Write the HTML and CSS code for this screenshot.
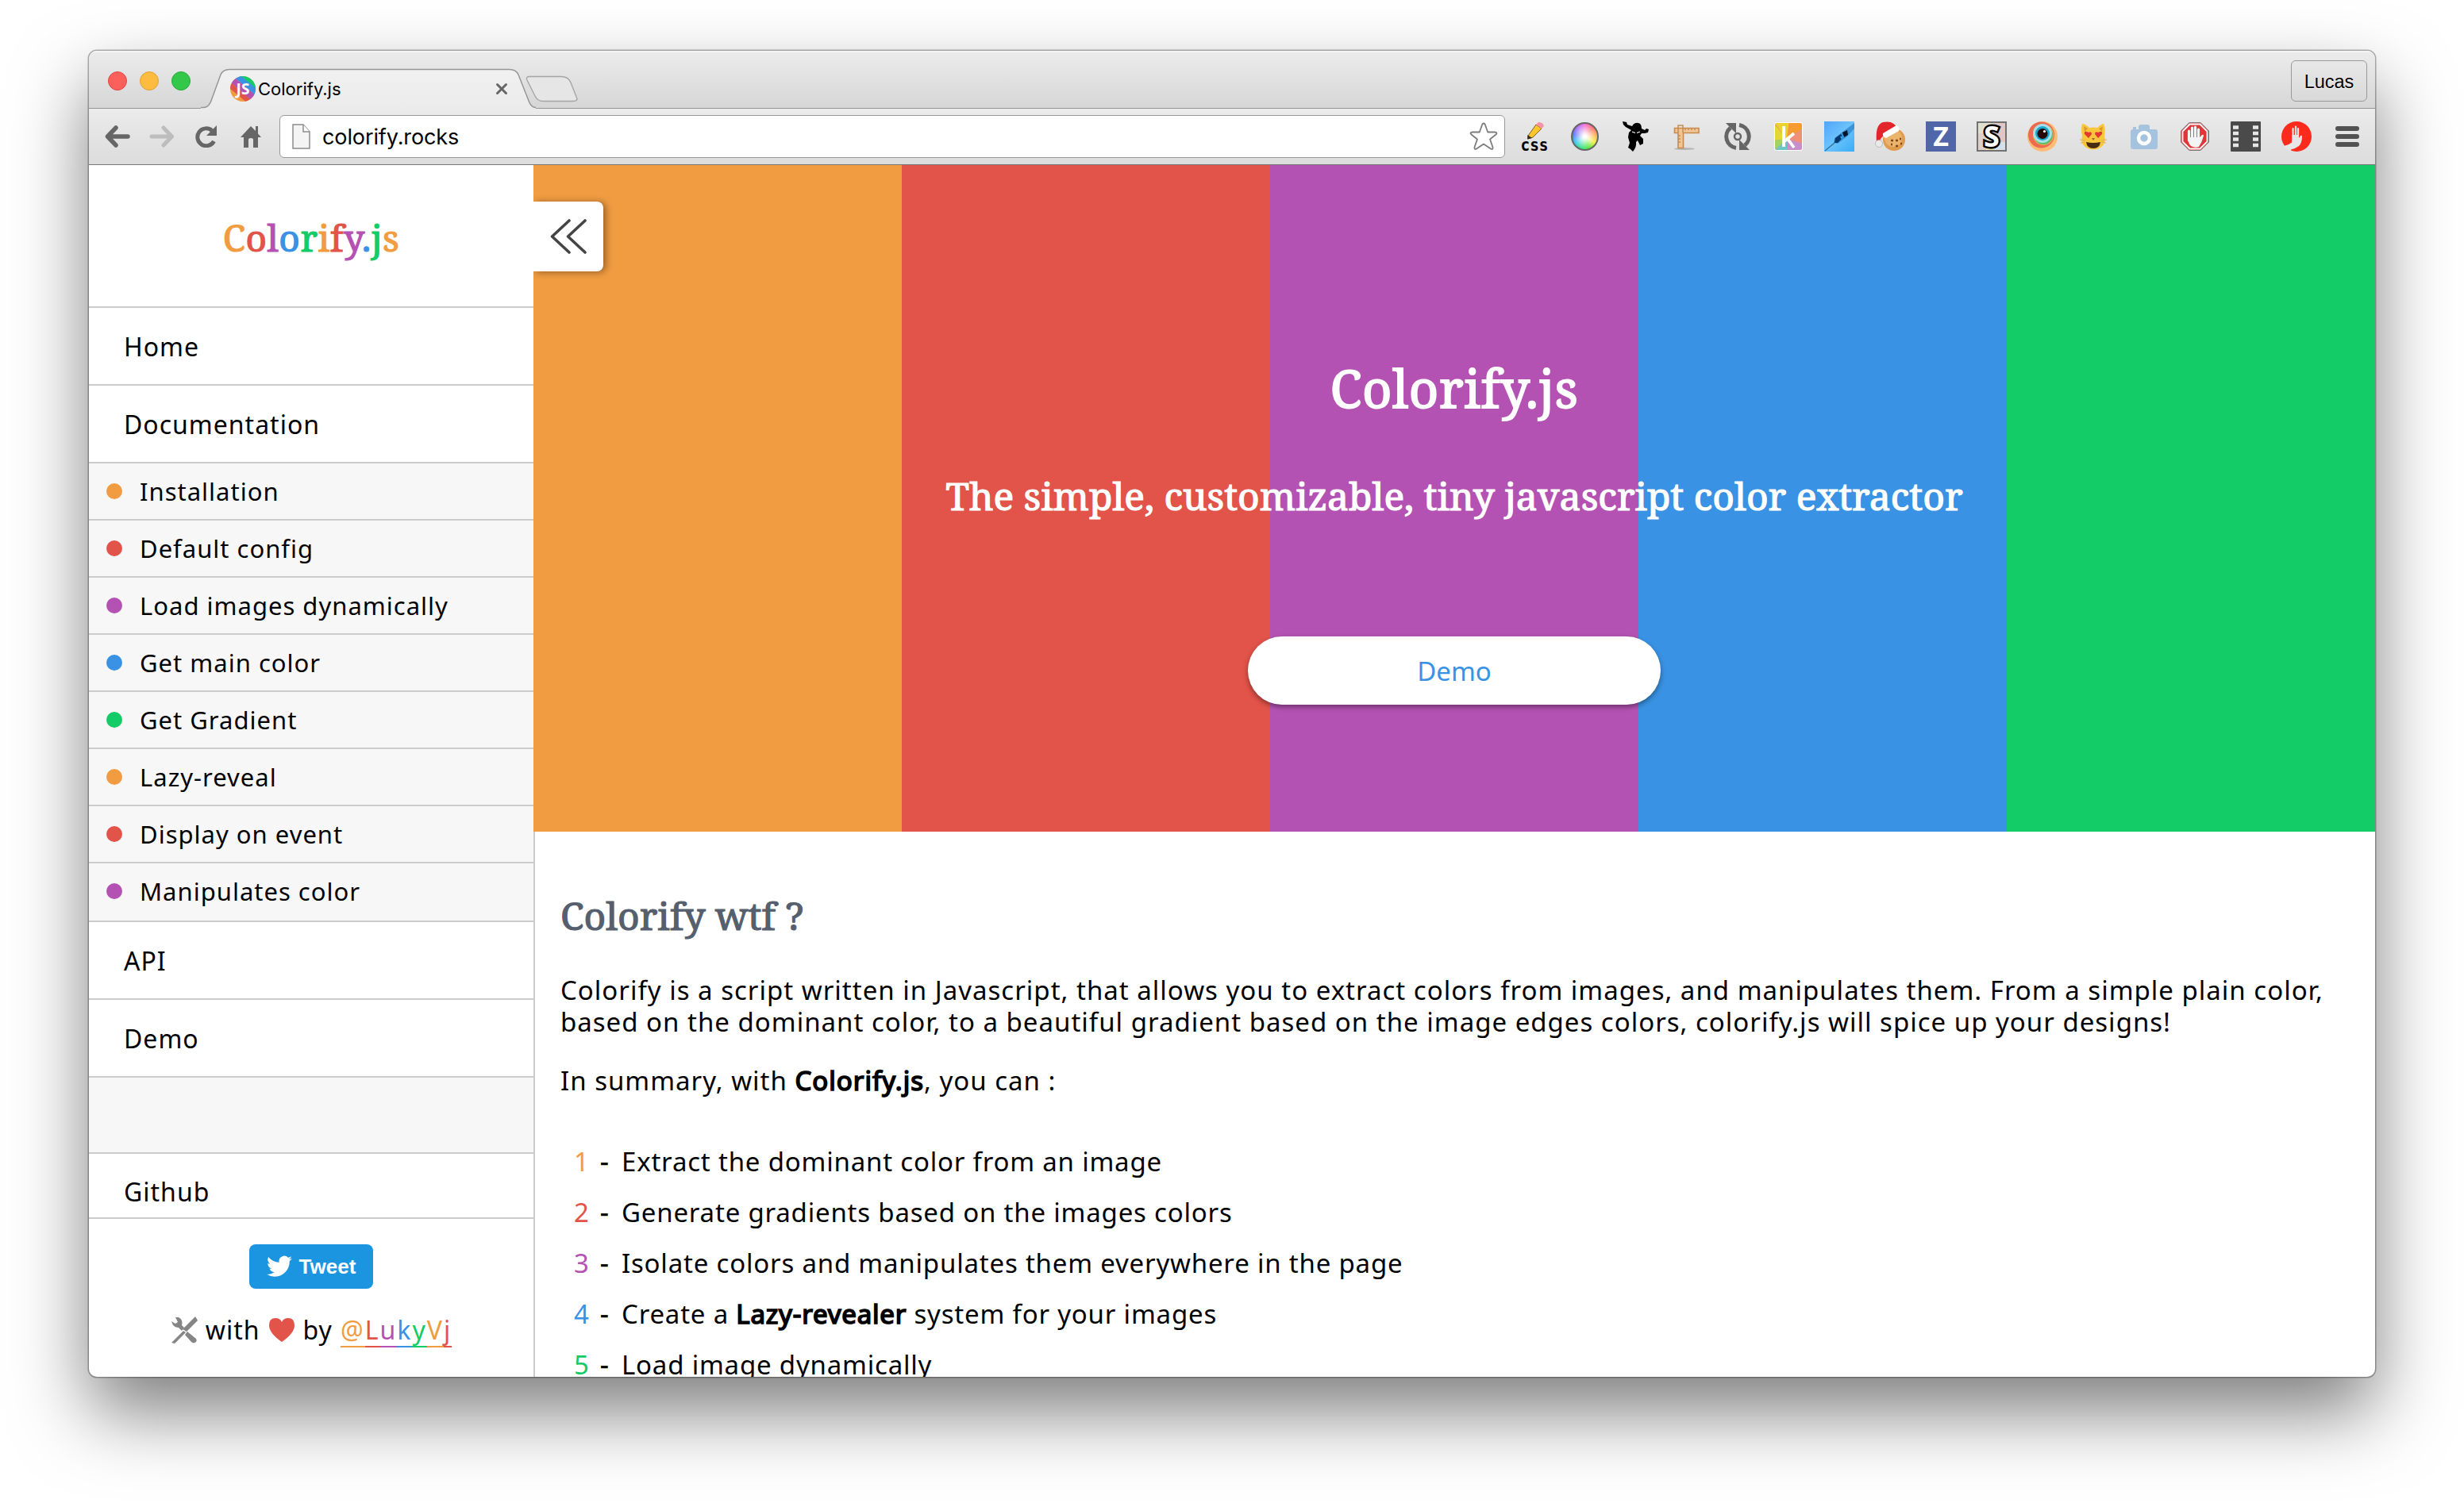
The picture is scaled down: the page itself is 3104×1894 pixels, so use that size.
FILE: index.html
```
<!DOCTYPE html>
<html lang="en">
<head>
    <meta charset="UTF-8">
    <title>Colorify.js</title>
    <link rel="stylesheet" href="styles.css">
</head>
<body>
    <div class="window">
        <div class="tabbar">
            <div class="lights">
                <span class="light close"></span>
                <span class="light minimize"></span>
                <span class="light expand"></span>
            </div>
            <div class="tab">
                <svg class="tab-shape" width="480" height="52" viewBox="0 0 480 52">
                    <defs>
                        <linearGradient id="tabFill" x1="0" y1="0" x2="0" y2="1">
                            <stop offset="0" stop-color="#f1f1f1"/>
                            <stop offset="1" stop-color="#ebebeb"/>
                        </linearGradient>
                    </defs>
                    <path d="M0 52V50.5H3Q10 50.5 13 42L25 9Q28 2.500 36 2.500H389Q397 2.500 400 9L413 42Q416 50.500 422 50.500V52Z" fill="url(#tabFill)"/>
                    <path d="M0 50.500H3Q10 50.500 13 42L25 9Q28 2.500 36 2.500H389Q397 2.500 400 9L413 42Q416 50.500 422 50.500" fill="none" stroke="#969696" stroke-width="1.500"/>
                    <path d="M414 11.500H454Q463 11.500 466 19L473 37Q476 42.500 469 42.500H431Q424 42.500 421 36L411 16Q409 11.500 414 11.500Z" fill="#e6e6e6" stroke="#a5a5a5" stroke-width="1.400"/>
                </svg>
                <div class="tab-content">
                    <svg width="32" height="32" viewBox="0 0 32 32">
                        <clipPath id="fav"><circle cx="16" cy="16" r="16"/></clipPath>
                        <g clip-path="url(#fav)">
                            <rect width="32" height="32" fill="#f19c41"/>
                            <g transform="rotate(40 16 16)">
                                <rect x="-8" y="-8" width="48" height="15" fill="#13cb67"/>
                                <rect x="-8" y="5" width="48" height="7" fill="#3992e3"/>
                                <rect x="-8" y="12" width="48" height="8" fill="#b452b3"/>
                                <rect x="-8" y="20" width="48" height="6" fill="#e25349"/>
                            </g>
                        </g>
                        <text x="16" y="23" text-anchor="middle" class="fav-text">JS</text>
                    </svg>
                    <span class="tab-title">Colorify.js</span>
                    <svg width="16" height="16" viewBox="0 0 16 16" stroke="#666" stroke-width="3" stroke-linecap="round">
                        <path d="M2.500 2.500l11 11M13.500 2.500l-11 11"/>
                    </svg>
                </div>
            </div>
            <div class="user">Lucas</div>
        </div>

        <div class="toolbar">
            <div class="nav">
                <svg width="32" height="28" viewBox="0 0 32 28" fill="none" stroke="#666" stroke-width="5.500" stroke-linecap="round" stroke-linejoin="round">
                    <path d="M14 3L3.500 14L14 25M5 14H29"/>
                </svg>
                <svg width="32" height="28" viewBox="0 0 32 28" fill="none" stroke="#bdbdbd" stroke-width="5" stroke-linecap="round" stroke-linejoin="round">
                    <path d="M18 3L28.500 14L18 25M27 14H3"/>
                </svg>
                <svg width="28" height="28" viewBox="0 0 28 28">
                    <path d="M21 6.500A11 11 0 1 0 23.500 20" fill="none" stroke="#666" stroke-width="5"/>
                    <path d="M27 0V13H14Z" fill="#666"/>
                </svg>
                <svg width="26" height="28" viewBox="0 0 26 28" fill="#666">
                    <path d="M13 1L0 15H4V28H10V18Q10 16 13 16T16 18V28H22V15H26L22 10.500V1H19V7Z"/>
                </svg>
            </div>
            <div class="omnibox">
                <svg width="24" height="32" viewBox="0 0 24 32">
                    <path d="M1 1H14L22 10V31H1Z" fill="#f4f4f4" stroke="#8c8c8c" stroke-width="1.500"/>
                    <path d="M14 1V10H22" fill="#fff" stroke="#8c8c8c" stroke-width="1.500"/>
                </svg>
                <span class="url">colorify.rocks</span>
                <svg width="36" height="36" viewBox="0 0 36 36" fill="#fff" stroke="#7c7c7c" stroke-width="1.800" stroke-linejoin="round">
                    <path d="M18 1.500Q19.500 1.500 20.200 4L23.200 12.500H32Q36 13 33.500 15.500L26 21.500L29.500 31.500Q30 35 27 33.500L18 27.500L9 33.500Q6 35 6.500 31.500L10 21.500L2.500 15.500Q0 13 4 12.500H12.800L15.800 4Q16.500 1.500 18 1.500Z"/>
                </svg>
            </div>
            <div class="extensions">
                <!-- css pencil -->
                <svg viewBox="0 0 38 38">
                    <path d="M11 18L21 4L28 9L17 20L11 22Z" fill="#fbc52b" stroke="#7a6320" stroke-width="1"/>
                    <path d="M21 4L24 1Q30 1 31 6L28 9Z" fill="#f492a6"/>
                    <path d="M10.500 17L16 21L10 22.500Z" fill="#332b18"/>
                    <text x="19" y="37" text-anchor="middle" textLength="35" lengthAdjust="spacingAndGlyphs" class="ext-css">css</text>
                </svg>
                <!-- color wheel -->
                <span class="wheel"></span>
                <!-- ninja -->
                <svg viewBox="0 0 38 38" fill="#000">
                    <path d="M2 0L7 1L8 4L14 6Q17 1 22 2Q26 3 26 9L30 11L32 9L35 10L34 14L30 15L26 15L24 18L28 22L28 28L24 30L21 24L19 26Q20 32 15 38L12 35L9 33L11 27L9 20L10 14L13 11L6 7L3 4Z"/>
                    <path d="M14 13L18 14.500M20 14.500L24 13" stroke="#fff" stroke-width="1.300"/>
                </svg>
                <!-- ruler -->
                <svg viewBox="0 0 38 38">
                    <ellipse cx="16" cy="34.500" rx="13" ry="1.500" fill="#b5b5b5"/>
                    <path d="M3.500 8.500H34V14.500H14.500V33.500H8V14.500H3.500Z" fill="#efc595" stroke="#c98a4e" stroke-width="1.600"/>
                    <path d="M8 14V5H14V14M17 8V11M21 8V11M25 8V11M29 8V11M8 18H11M8 22H11M8 26H11" fill="none" stroke="#c98a4e" stroke-width="1.500"/>
                </svg>
                <!-- refresh -->
                <svg viewBox="0 0 38 38" fill="none" stroke="#656565">
                    <path d="M17 33.500A14.500 14.500 0 0 1 10 8M21 4.500A14.500 14.500 0 0 1 28 30" stroke-width="5"/>
                    <path d="M4 2H17V15ZM34 36H21V23Z" fill="#656565" stroke="none"/>
                    <circle cx="19" cy="19" r="4" stroke-width="2.500"/>
                </svg>
                <!-- k -->
                <svg viewBox="0 0 38 38">
                    <clipPath id="kBox"><rect x="2" y="2" width="34" height="34" rx="3"/></clipPath>
                    <rect x="1" y="1" width="36" height="36" rx="4" fill="#fff"/>
                    <g clip-path="url(#kBox)">
                        <rect x="2" y="2" width="34" height="34" fill="#f08f78"/>
                        <path d="M17 22L0 0H20Z" fill="#ecd22f"/>
                        <path d="M17 22L20 0H38V8Z" fill="#f79a31"/>
                        <path d="M17 22L0 2V24Z" fill="#e3d733"/>
                        <path d="M17 22L0 24V38Z" fill="#a5d35f"/>
                        <path d="M17 22L0 38H17Z" fill="#6cc6c4"/>
                        <path d="M17 22L17 38H38V28Z" fill="#c78fc9"/>
                    </g>
                    <path d="M13 6V32M26 15L14 25M18 22L26 33" stroke="#fff" stroke-width="3.800" fill="none"/>
                </svg>
                <!-- syringe -->
                <svg viewBox="0 0 38 38">
                    <defs>
                        <linearGradient id="sky" x1="0" y1="0" x2="1" y2="1">
                            <stop offset="0" stop-color="#52a4fb"/>
                            <stop offset=".5" stop-color="#6cc3fb"/>
                            <stop offset="1" stop-color="#38adf8"/>
                        </linearGradient>
                    </defs>
                    <rect width="38" height="38" fill="url(#sky)"/>
                    <path d="M38 2V9L29 19L17 28L12 27L13 21L22 14Z" fill="#3b93d6"/>
                    <path d="M14 21L21 16L24 20L17 27L13 27Z" fill="#07396d"/>
                    <path d="M23 14L29 11L30 17L25 20Z" fill="#041527"/>
                    <path d="M20 19L25 18L22 23Z" fill="#2da4ef"/>
                    <path d="M13 27L1 37" stroke="#33749f" stroke-width="1.500"/>
                </svg>
                <!-- cookie with hat -->
                <svg viewBox="0 0 38 38">
                    <circle cx="24" cy="23" r="14" fill="#df9b4e"/>
                    <circle cx="23" cy="21" r="11" fill="#eab46d"/>
                    <path d="M2 26Q0 4 10 1Q24 -2 29 10L12 18Q6 20 6 27Z" fill="#e3252b"/>
                    <path d="M10 15L27 5Q32 7 30 12L14 21Q9 20 10 15Z" fill="#fff"/>
                    <circle cx="5" cy="28" r="4.500" fill="#e9e9e9" stroke="#aaa" stroke-width=".7"/>
                    <path d="M20 24h3M26 24h3M31 22h2M20 29h2M26 31h3M32 28h2" stroke="#81461e" stroke-width="2.500"/>
                </svg>
                <!-- Z -->
                <svg viewBox="0 0 38 38">
                    <rect width="38" height="38" fill="#5165a9"/>
                    <text x="19" y="31" text-anchor="middle" class="ext-z">Z</text>
                </svg>
                <!-- S -->
                <svg viewBox="0 0 38 38">
                    <rect width="38" height="38" fill="#dfe0d0"/>
                    <path d="M22 0H38V26H22Z" fill="#e1c6c4"/>
                    <path d="M22 26H38V38H22Z" fill="#d5e0e7"/>
                    <path d="M0 15H12V38H0Z" fill="#ddd0c9"/>
                    <path d="M12 32H22V38H12Z" fill="#eae2a6"/>
                    <rect x="1" y="1" width="36" height="36" fill="none" stroke="#727272" stroke-width="2"/>
                    <text x="19" y="31.500" text-anchor="middle" class="ext-s">S</text>
                </svg>
                <!-- eye -->
                <svg viewBox="0 0 38 38">
                    <circle cx="19" cy="19" r="19" fill="#fdbb73"/>
                    <circle cx="17.500" cy="17" r="16.500" fill="#ec6a50"/>
                    <circle cx="20" cy="17" r="13" fill="#e8b44f"/>
                    <circle cx="20" cy="17" r="12" fill="#5abb68"/>
                    <circle cx="19" cy="15" r="12" fill="#a7dfe6"/>
                    <circle cx="19" cy="15" r="9" fill="#19a4cd"/>
                    <circle cx="19" cy="15.500" r="6.500" fill="#260807"/>
                    <circle cx="21.500" cy="12.500" r="1.600" fill="#fff"/>
                </svg>
                <!-- cat -->
                <svg viewBox="0 0 38 38">
                    <path d="M5 3Q9 3 14 8Q19 7 24 8Q29 3 32 3Q35 10 33 18Q36 28 28 33Q19 38 10 33Q2 28 5 18Q3 10 5 3Z" fill="#fac63c"/>
                    <path d="M7 6L8 13L12 9ZM31 6L30 13L26 9Z" fill="#dc9a35"/>
                    <path d="M13 21L8 16Q7 12 11 13L13 14Q17 12 17 16ZM25 21L30 16Q31 12 27 13L25 14Q21 12 21 16Z" fill="#e13a31"/>
                    <path d="M10 26Q19 28 28 26Q27 34 19 34T10 26Z" fill="#4b2a14"/>
                    <path d="M17 21H21L19 24Z" fill="#9b6a3b"/>
                    <path d="M2 23L9 24M3 27L9 26M36 23L29 24M35 27L29 26" stroke="#dfb160" stroke-width="1"/>
                </svg>
                <!-- camera -->
                <svg viewBox="0 0 38 38">
                    <path d="M12 10V7Q12 4 15 4H23Q26 4 26 7V10H33Q36 10 36 13V32Q36 35 33 35H5Q2 35 2 32V13Q2 10 5 10V7H9V10Z" fill="#a5c3df"/>
                    <circle cx="19" cy="21" r="7" fill="#a5c3df" stroke="#fff" stroke-width="4.500"/>
                </svg>
                <!-- stop hand -->
                <svg viewBox="0 0 38 38">
                    <path d="M12 1.500H26L36.500 12V26L26 36.500H12L1.500 26V12Z" fill="#e1353a" stroke="#777" stroke-width="1"/>
                    <path d="M12.600 3.500H25.400L34.500 12.600V25.400L25.400 34.500H12.600L3.500 25.400V12.600Z" fill="none" stroke="#fff" stroke-width="1.800"/>
                    <path d="M11.500 24V12M15.500 22V8M19.500 22V7M23.500 22V10" stroke="#f4f4f4" stroke-width="3.200" stroke-linecap="round"/>
                    <path d="M10 20H25L28 17Q30 16 30 18Q28 26 24 32Q19 34 14 31Q10 27 10 20Z" fill="#f4f4f4"/>
                </svg>
                <!-- film -->
                <svg viewBox="0 0 38 38">
                    <rect width="38" height="38" rx="1" fill="#4a4a4a"/>
                    <path d="M3 7.500h7M3 15h7M3 22.500h7M3 30h7M28 7.500h7M28 15h7M28 22.500h7M28 30h7" stroke="#e6e6e6" stroke-width="4.300"/>
                </svg>
                <!-- red hand -->
                <svg viewBox="0 0 38 38">
                    <circle cx="19" cy="19" r="19" fill="#fe2a1b"/>
                    <path d="M14.500 20V9M18 18V6.500M21 18V9" stroke="#e6e6e6" stroke-width="2.200" stroke-linecap="round"/>
                    <path d="M13.400 17H22V21L24 18Q26 17 26 19Q26 27 22 31Q18 34 12 35.500L12 37.500Q6 35 3 31Q9 30 13 26.500Z" fill="#e6e6e6"/>
                </svg>
            </div>
            <div class="menu"><i></i><i></i><i></i></div>
        </div>

        <div class="page">
            <aside class="sidebar">
                <div class="logo"><span class="c1">C</span><span class="c2">o</span><span class="c3">l</span><span class="c4">o</span><span class="c5">r</span><span class="c1">i</span><span class="c2">f</span><span class="c3">y</span><span class="c4">.</span><span class="c5">j</span><span class="c1">s</span></div>
                <ul class="main-nav">
                    <li>Home</li>
                    <li>Documentation</li>
                    <li class="sub"><i class="dot b1"></i>Installation</li>
                    <li class="sub"><i class="dot b2"></i>Default config</li>
                    <li class="sub"><i class="dot b3"></i>Load images dynamically</li>
                    <li class="sub"><i class="dot b4"></i>Get main color</li>
                    <li class="sub"><i class="dot b5"></i>Get Gradient</li>
                    <li class="sub"><i class="dot b1"></i>Lazy-reveal</li>
                    <li class="sub"><i class="dot b2"></i>Display on event</li>
                    <li class="sub last"><i class="dot b3"></i>Manipulates color</li>
                    <li>API</li>
                    <li>Demo</li>
                    <li class="blank"></li>
                    <li class="cut">Github</li>
                </ul>
                <div class="sidebar-footer">
                    <div class="tweet">
                        <svg width="32" height="28" viewBox="0 0 24 20" fill="#fff">
                            <path d="M24 2.370a9.800 9.800 0 0 1-2.830.780A4.900 4.900 0 0 0 23.340.420a9.900 9.900 0 0 1-3.130 1.200 4.920 4.920 0 0 0-8.390 4.490A14 14 0 0 1 1.670.960a4.900 4.900 0 0 0 1.520 6.570 4.900 4.900 0 0 1-2.230-.610v.060a4.920 4.920 0 0 0 3.950 4.830 5 5 0 0 1-2.220.080 4.930 4.930 0 0 0 4.600 3.420A9.900 9.900 0 0 1 0 17.340a14 14 0 0 0 7.550 2.210c9.060 0 14-7.500 14-14v-.640A10 10 0 0 0 24 2.370z"/>
                        </svg>
                        Tweet
                    </div>
                    <div class="credits">
                        <svg width="34" height="34" viewBox="0 0 34 34" fill="#858585">
                            <path d="M31 0L34 5L20 19L15 16ZM16 18L19 20L5 34L1 33Z"/>
                            <path d="M6 1L10 1Q16 4 14 11L17 14L14 18L10 14Q3 14 1 6L6 9L9 7Z"/>
                            <path d="M21 19L32 28Q34 32 30 33Q28 34 26 32L18 23Z"/>
                        </svg>
                        <span>with</span>
                        <svg width="34" height="30" viewBox="0 0 34 30"><path d="M17 30Q1 19 1 9Q1 0 9 0Q15 0 17 5Q19 0 25 0Q33 0 33 9Q33 19 17 30Z" fill="#e25349"/></svg>
                        <span>by</span>
                        <a class="author"><span class="c1">@</span><span class="c2">L</span><span class="c3">u</span><span class="c4">k</span><span class="c5">y</span><span class="c1">V</span><span class="c2">j</span></a>
                    </div>
                </div>
            </aside>

            <main class="content">
                <header class="hero">
                    <h1>Colorify.js</h1>
                    <h2>The simple, customizable, tiny javascript color extractor</h2>
                    <a class="demo-btn">Demo</a>
                </header>
                <div class="toggle">
                    <svg width="46" height="46" viewBox="0 0 46 46" fill="none" stroke="#444" stroke-width="3.600" stroke-linecap="round" stroke-linejoin="round">
                        <path d="M24 3L2.500 23L24 43M44 3L22.500 23L44 43"/>
                    </svg>
                </div>
                <article class="intro">
                    <h3>Colorify wtf ?</h3>
                    <p>Colorify is a script written in Javascript, that allows you to extract colors from images, and manipulates them. From a simple plain color, based on the dominant color, to a beautiful gradient based on the image edges colors, colorify.js will spice up your designs!</p>
                    <p>In summary, with <strong>Colorify.js</strong>, you can :</p>
                    <ul class="features">
                        <li><span class="num c1">1</span><span class="dash">-</span>Extract the dominant color from an image</li>
                        <li><span class="num c2">2</span><span class="dash">-</span>Generate gradients based on the images colors</li>
                        <li><span class="num c3">3</span><span class="dash">-</span>Isolate colors and manipulates them everywhere in the page</li>
                        <li><span class="num c4">4</span><span class="dash">-</span><span>Create a <strong>Lazy-revealer</strong> system for your images</span></li>
                        <li><span class="num c5">5</span><span class="dash">-</span>Load image dynamically</li>
                    </ul>
                </article>
            </main>
        </div>
    </div>
</body>
</html>
```
FILE: styles.css
```
* {
    box-sizing: border-box;
}

body {
    margin: 0;
    height: 1894px;
    overflow: hidden;
    padding: 64px 112px 0;
    background: #fff;
    color: #000;
    font-family: "Noto Sans", sans-serif;
}

ul {
    list-style: none;
    margin: 0;
    padding: 0;
}

h1, h2, h3, p {
    margin: 0;
}

strong {
    font-weight: 400;
    -webkit-text-stroke: 1.7px #000;
}

.c1 { color: #f19c41; }
.c2 { color: #e25349; }
.c3 { color: #b452b3; }
.c4 { color: #3992e3; }
.c5 { color: #13cb67; }

.b1 { background: #f19c41; }
.b2 { background: #e25349; }
.b3 { background: #b452b3; }
.b4 { background: #3992e3; }
.b5 { background: #13cb67; }

.window {
    height: 1671px;
    border-radius: 10px;
    overflow: hidden;
    background: #fff;
    box-shadow: 0 0 0 1.5px rgba(0, 0, 0, .3), 0 44px 94px rgba(0, 0, 0, .51);
}

/* browser chrome */
.tabbar {
    height: 73px;
    display: flex;
    align-items: flex-end;
    padding-left: 24px;
    background: linear-gradient(#ececec, #d6d6d6);
    border-bottom: 1px solid #969696;
    box-shadow: inset 0 2px 0 #f4f4f4;
}

.lights {
    display: flex;
    gap: 16px;
    margin-bottom: 22px;
}

.light {
    width: 24px;
    height: 24px;
    border-radius: 50%;
}

.close { background: #fc605b; border: 1px solid #e0443f; }
.minimize { background: #fdbc40; border: 1px solid #dea034; }
.expand { background: #34c84a; border: 1px solid #27a938; }

.tab {
    position: relative;
    width: 480px;
    height: 52px;
    margin: 0 0 -1px 13px;
}

.tab-shape {
    position: absolute;
    left: 0;
    top: 0;
}

.tab-content {
    position: relative;
    display: flex;
    align-items: center;
    width: 387px;
    height: 53px;
    padding-left: 37px;
}

.tab-content svg,
.extensions svg {
    overflow: visible;
}

.tab-title {
    flex: 1;
    margin-left: 3px;
    font: 22px "Inter", sans-serif;
}

.fav-text {
    font: bold 19px "Open Sans", sans-serif;
    fill: #fff;
}

.user {
    width: 96px;
    height: 52px;
    margin: 0 10px 8px auto;
    border: 1.5px solid #999;
    border-radius: 6px;
    text-align: center;
    font: 23.5px/53px "Liberation Sans", sans-serif;
    text-shadow: 0 1px 1px #fff;
}

.toolbar {
    height: 71px;
    display: flex;
    align-items: center;
    padding-left: 20px;
    background: linear-gradient(#ebebeb, #dcdcdc);
    border-bottom: 1px solid #777;
}

.nav {
    display: flex;
    align-items: center;
    gap: 24px;
    width: 220px;
}

.nav svg:nth-child(3) {
    margin-left: 2px;
}

.nav svg:nth-child(4) {
    margin-left: 5px;
}

.omnibox {
    width: 1544px;
    height: 54px;
    display: flex;
    align-items: center;
    padding: 0 8px 0 15px;
    background: #fff;
    border: 1.5px solid #999;
    border-radius: 6px;
}

.url {
    flex: 1;
    margin-left: 14px;
    font: 27px "Inter", sans-serif;
    letter-spacing: -.1px;
}

.extensions {
    display: flex;
    gap: 26px;
    margin-left: 18px;
}

.extensions svg {
    width: 38px;
    height: 38px;
    display: block;
    margin-top: -1px;
}

.wheel {
    width: 35px;
    height: 36px;
    margin: 0 2px 0 1px;
    border-radius: 50%;
    border: 2px solid #666;
    background: radial-gradient(#fff 8%, rgba(255, 255, 255, 0) 70%), conic-gradient(#f56fd0, #ff6c6c, #ffa84b, #f3ee3c, #56e53b, #2fe38b, #32c2f0, #5570ff, #a86dff, #f56fd0);
}

.ext-css {
    font: bold 21px "DejaVu Sans Mono", monospace;
}

.ext-z {
    font: bold 34px "Open Sans", sans-serif;
    fill: #fff;
}

.ext-s {
    font: bold 36px "Open Sans", sans-serif;
    fill: #fff;
    stroke: #000;
    stroke-width: 5px;
    paint-order: stroke;
}

.menu {
    display: flex;
    flex-direction: column;
    gap: 4px;
    margin-left: 30px;
}

.menu i {
    width: 30px;
    height: 6px;
    border-radius: 3px;
    background: #525252;
}

/* page */
.page {
    display: flex;
    height: 1527px;
}

.sidebar {
    width: 560px;
    height: 1527px;
    display: flex;
    flex-direction: column;
    font-size: 32px;
    letter-spacing: 1px;
}

.logo {
    height: 180px;
    flex: none;
    border-bottom: 2px solid #ccc;
    text-align: center;
    font: 46px/182px "Noto Serif", serif;
    letter-spacing: .5px;
    -webkit-text-stroke: 1.2px;
}

.main-nav {
    height: 1146px;
    flex: none;
    overflow: hidden;
}

.main-nav li {
    display: flex;
    align-items: center;
    height: 98px;
    padding-left: 44px;
    border-bottom: 2px solid #ccc;
}

.main-nav .sub {
    height: 72px;
    padding-left: 22px;
    background: #f7f7f7;
    font-size: 31px;
}

.main-nav .last {
    height: 74px;
    padding-bottom: 2px;
}

.main-nav .blank {
    height: 96px;
    background: #f7f7f7;
}

.main-nav .cut {
    border: 0;
    height: 94px;
}

.dot {
    width: 20px;
    height: 20px;
    margin-right: 22px;
    border-radius: 50%;
}

.sidebar-footer {
    height: 201px;
    border-top: 2px solid #ccc;
    display: flex;
    flex-direction: column;
    align-items: center;
    padding-top: 32px;
}

.tweet {
    width: 156px;
    height: 56px;
    display: flex;
    align-items: center;
    justify-content: center;
    gap: 9px;
    border-radius: 8px;
    background: #1b95e0;
    color: #fff;
    font: bold 26px "Liberation Sans", sans-serif;
    letter-spacing: 0;
}

.credits {
    display: flex;
    align-items: center;
    gap: 10px;
    margin-top: 30px;
    line-height: 44px;
}

.author {
    letter-spacing: 2px;
    text-decoration: none;
}

.author span {
    display: inline-block;
    height: 44px;
    border-bottom: 2px solid;
}

.content {
    position: relative;
    width: 2320px;
    height: 1527px;
    overflow: hidden;
}

.hero {
    height: 840px;
    padding-top: 241px;
    text-align: center;
    color: #fff;
    font-family: "Noto Serif", serif;
    background: linear-gradient(90deg, #f19c41 20%, #e25349 20%, #e25349 40%, #b452b3 40%, #b452b3 60%, #3992e3 60%, #3992e3 80%, #13cb67 80%);
}

.hero h1 {
    font-size: 65px;
    font-weight: 400;
    line-height: 80px;
    letter-spacing: .6px;
    -webkit-text-stroke: 1.8px;
}

.hero h2 {
    margin-top: 66px;
    font-size: 48px;
    font-weight: 400;
    line-height: 60px;
    -webkit-text-stroke: 1.2px;
}

.demo-btn {
    display: block;
    width: 520px;
    height: 86px;
    margin: 147px auto 0;
    border-radius: 43px;
    background: #fff;
    color: #3992e3;
    font: 33px/88px "Noto Sans", sans-serif;
    box-shadow: 0 3px 6px rgba(0, 0, 0, .4);
}

/* handle lying over the hero */
.toggle {
    position: absolute;
    left: 0;
    top: 46px;
    width: 88px;
    height: 88px;
    display: flex;
    align-items: center;
    justify-content: center;
    background: #fff;
    border-radius: 0 8px 8px 0;
    box-shadow: 3px 1px 10px rgba(0, 0, 0, .4);
}

.intro {
    height: 687px;
    padding: 76px 30px 0 32px;
    border-left: 2px solid #ccc;
    font-size: 33px;
    line-height: 40px;
    letter-spacing: 1px;
}

.intro h3 {
    margin-bottom: 44px;
    color: #555f6e;
    font: 48px/60px "Noto Serif", serif;
    letter-spacing: 0;
    -webkit-text-stroke: 1.2px;
}

.intro p {
    margin-bottom: 34px;
}

.features {
    margin-top: 50px;
    padding-left: 17px;
    line-height: 64px;
    letter-spacing: .8px;
}

.features li {
    display: flex;
}

.num {
    width: 33px;
}

.dash {
    width: 27px;
    -webkit-text-stroke: .6px;
}
```
